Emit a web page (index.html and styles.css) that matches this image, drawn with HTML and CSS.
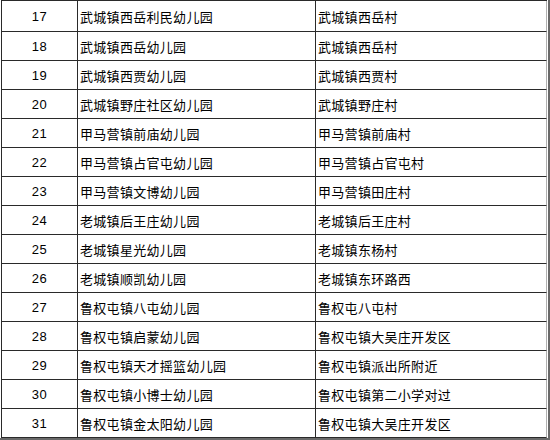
FILE: index.html
```html
<!DOCTYPE html>
<html lang="zh">
<head>
<meta charset="utf-8">
<link rel="stylesheet" href="styles.css">
</head>
<body>
<div class="frame">
  <div class="grid">
    <div class="cell num">17</div><div class="cell">武城镇西岳利民幼儿园</div><div class="cell last">武城镇西岳村</div>
    <div class="cell num">18</div><div class="cell">武城镇西岳幼儿园</div><div class="cell last">武城镇西岳村</div>
    <div class="cell num">19</div><div class="cell">武城镇西贾幼儿园</div><div class="cell last">武城镇西贾村</div>
    <div class="cell num">20</div><div class="cell">武城镇野庄社区幼儿园</div><div class="cell last">武城镇野庄村</div>
    <div class="cell num">21</div><div class="cell">甲马营镇前庙幼儿园</div><div class="cell last">甲马营镇前庙村</div>
    <div class="cell num">22</div><div class="cell">甲马营镇占官屯幼儿园</div><div class="cell last">甲马营镇占官屯村</div>
    <div class="cell num">23</div><div class="cell">甲马营镇文博幼儿园</div><div class="cell last">甲马营镇田庄村</div>
    <div class="cell num">24</div><div class="cell">老城镇后王庄幼儿园</div><div class="cell last">老城镇后王庄村</div>
    <div class="cell num">25</div><div class="cell">老城镇星光幼儿园</div><div class="cell last">老城镇东杨村</div>
    <div class="cell num">26</div><div class="cell">老城镇顺凯幼儿园</div><div class="cell last">老城镇东环路西</div>
    <div class="cell num">27</div><div class="cell">鲁权屯镇八屯幼儿园</div><div class="cell last">鲁权屯八屯村</div>
    <div class="cell num">28</div><div class="cell">鲁权屯镇启蒙幼儿园</div><div class="cell last">鲁权屯镇大吴庄开发区</div>
    <div class="cell num">29</div><div class="cell">鲁权屯镇天才摇篮幼儿园</div><div class="cell last">鲁权屯镇派出所附近</div>
    <div class="cell num">30</div><div class="cell">鲁权屯镇小博士幼儿园</div><div class="cell last">鲁权屯镇第二小学对过</div>
    <div class="cell num">31</div><div class="cell">鲁权屯镇金太阳幼儿园</div><div class="cell last">鲁权屯镇大吴庄开发区</div>
  </div>
</div>
</body>
</html>
```

FILE: styles.css
```css
html, body {
  margin: 0;
  padding: 0;
  background: #ffffff;
}
.frame {
  width: 548px;
  height: 438px;
  border-right: 2px solid #6a6a6a;
  border-bottom: 2px solid #6a6a6a;
  background: #ffffff;
  overflow: hidden;
}
.grid {
  display: grid;
  grid-template-columns: 76px 238px 231px;
  grid-template-rows: 31px repeat(14, 29px);
  margin-left: 1px;
  width: 546px;
  box-sizing: border-box;
  border-left: 1px solid #2a2a2a;
  border-top: 1px solid #2a2a2a;
  font-family: "Liberation Sans", "Noto Sans CJK SC", sans-serif;
  font-size: 13px;
  letter-spacing: 0.3px;
  color: #000000;
}
.cell {
  box-sizing: border-box;
  border-right: 1px solid #2a2a2a;
  border-bottom: 1px solid #2a2a2a;
  display: flex;
  align-items: center;
  padding-left: 2px;
  padding-top: 1px;
  white-space: nowrap;
  overflow: hidden;
}
.cell.last {
  border-right-color: #b0b0b0;
}
.cell.num {
  justify-content: center;
  padding-left: 0;
  letter-spacing: 0.5px;
}
```
